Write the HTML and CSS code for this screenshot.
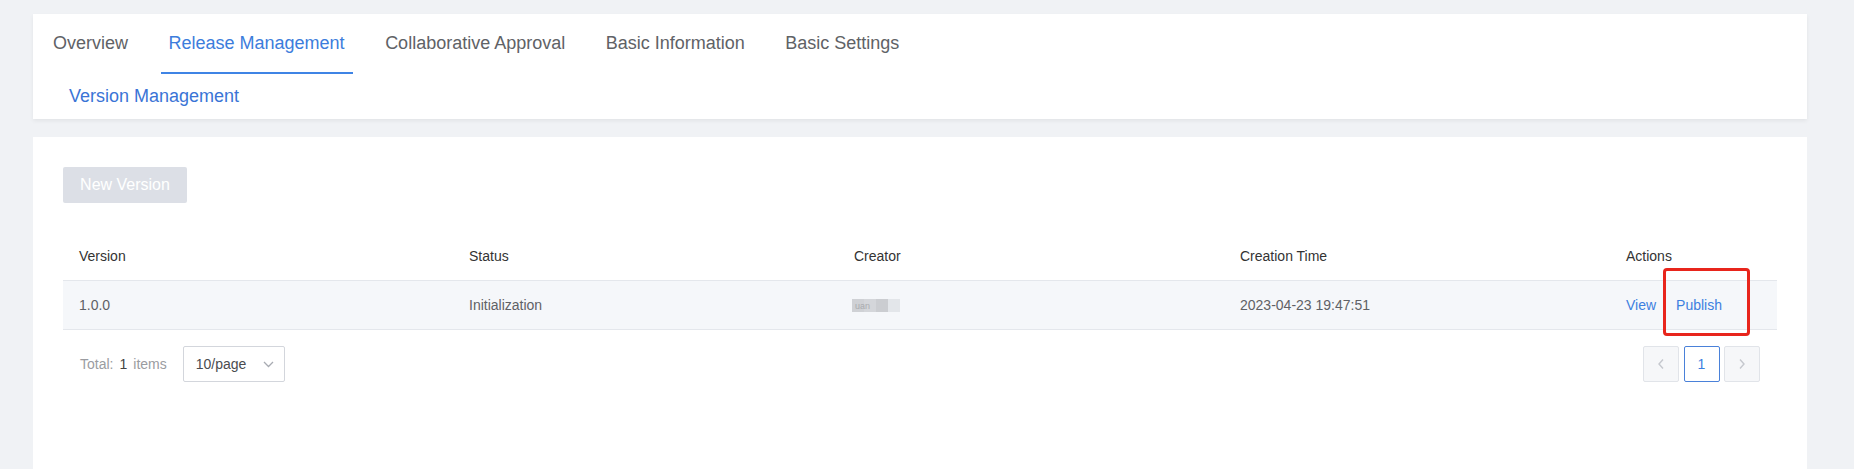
FILE: index.html
```html
<!DOCTYPE html>
<html lang="en">
<head>
<meta charset="utf-8">
<title>Release Management</title>
<link rel="stylesheet" href="styles.css">
</head>
<body>
<div class="page">
  <div class="card nav-card">
    <div class="tabs">
      <div class="tab">Overview</div>
      <div class="tab active">Release Management</div>
      <div class="tab">Collaborative Approval</div>
      <div class="tab">Basic Information</div>
      <div class="tab">Basic Settings</div>
    </div>
    <div class="subnav">Version Management</div>
  </div>

  <div class="card main-card">
    <button class="btn-new" disabled>New Version</button>

    <div class="table">
      <div class="row head">
        <div class="cell">Version</div>
        <div class="cell">Status</div>
        <div class="cell">Creator</div>
        <div class="cell">Creation Time</div>
        <div class="cell">Actions</div>
      </div>
      <div class="row body">
        <div class="cell">1.0.0</div>
        <div class="cell">Initialization</div>
        <div class="cell"><span class="blur"><span class="blur-text">uan</span></span></div>
        <div class="cell">2023-04-23 19:47:51</div>
        <div class="cell actions">
          <a class="link">View</a><a class="link publish">Publish</a>
          <div class="highlight"></div>
        </div>
      </div>
    </div>

    <div class="pager">
      <div class="pager-left">
        <span class="muted">Total:</span><span class="num">1</span><span class="muted">items</span>
        <div class="select">
          <span>10/page</span>
          <svg class="chev" width="11" height="7" viewBox="0 0 11 7"><path d="M1 1l4.5 4.5L10 1" fill="none" stroke="#a8abb2" stroke-width="1.3"/></svg>
        </div>
      </div>
      <div class="pager-right">
        <div class="pbtn disabled"><svg width="8" height="12" viewBox="0 0 8 12"><path d="M6 1.5L2 6l4 4.5" fill="none" stroke="#c5c8ce" stroke-width="1.4"/></svg></div>
        <div class="pbtn current">1</div>
        <div class="pbtn disabled"><svg width="8" height="12" viewBox="0 0 8 12"><path d="M2 1.5L6 6l-4 4.5" fill="none" stroke="#c5c8ce" stroke-width="1.4"/></svg></div>
      </div>
    </div>
  </div>
</div>
</body>
</html>
```
FILE: styles.css
```css
html, body {
  margin: 0;
  padding: 0;
  background: #f0f2f5;
  font-family: "Liberation Sans", Arial, sans-serif;
  height: 100%;
  overflow: hidden;
}

.page {
  padding: 14px 47px 0 33px;
  display: flex;
  flex-direction: column;
  gap: 18px;
}

.card {
  background: #ffffff;
}

.nav-card {
  box-shadow: 0 2px 4px rgba(0, 0, 0, 0.06);
  display: flex;
  flex-direction: column;
}

.tabs {
  display: flex;
  gap: 24.5px;
  padding-left: 12px;
  height: 60px;
}

.tab {
  padding: 0 8px;
  font-size: 18px;
  color: #606266;
  line-height: 58px;
  border-bottom: 2px solid transparent;
  white-space: nowrap;
}

.tab.active {
  color: #3c7ddc;
  border-bottom-color: #3f84e5;
}

.subnav {
  padding-left: 36px;
  height: 45px;
  line-height: 45px;
  font-size: 18px;
  color: #3a74d6;
}

.main-card {
  padding: 30px 30px 0 30px;
  min-height: 332px;
  box-sizing: border-box;
}

.btn-new {
  display: block;
  width: 124px;
  height: 36px;
  border: none;
  border-radius: 2px;
  background: #dcdfe6;
  color: #ffffff;
  font-family: "Liberation Sans", Arial, sans-serif;
  font-size: 16px;
  padding: 0;
}

.table {
  margin-top: 29px;
}

.row {
  display: grid;
  grid-template-columns: 390px 385px 386px 386px 1fr;
  border-bottom: 1px solid #e4e7ec;
}

.row.body {
  background: #f5f7fa;
}

.cell {
  padding-left: 16px;
  height: 48px;
  line-height: 48px;
  font-size: 14px;
  white-space: nowrap;
}

.head .cell {
  color: #333333;
}

.body .cell {
  color: #5f6166;
}

.actions {
  position: relative;
}

.link {
  color: #3d7fe0;
  cursor: pointer;
}

.publish {
  margin-left: 20px;
}

.highlight {
  position: absolute;
  left: 53px;
  top: -13px;
  width: 81px;
  height: 62px;
  border: 3.5px solid #e8251c;
  border-radius: 4px;
}

.blur {
  display: inline-block;
  vertical-align: middle;
  position: relative;
  width: 48px;
  height: 13px;
  margin-left: -2px;
  margin-top: -2px;
  background: linear-gradient(to right, #cfd1d5 0, #cfd1d5 12px, #d4d6da 12px, #d4d6da 24px, #cbcdd1 24px, #cbcdd1 36px, #e3e6ea 36px, #e3e6ea 48px);
}

.blur-text {
  position: absolute;
  left: 3px;
  top: 2px;
  font-size: 9px;
  line-height: 10px;
  color: #8a8c90;
  opacity: 0.55;
}

.pager {
  margin-top: 16px;
  padding: 0 17px;
  display: flex;
  justify-content: space-between;
  align-items: center;
}

.pager-left {
  display: flex;
  align-items: center;
  font-size: 14px;
}

.muted {
  color: #9a9ca1;
}

.num {
  color: #444;
  margin: 0 6px;
}

.select {
  margin-left: 16px;
  width: 102px;
  height: 36px;
  box-sizing: border-box;
  border: 1px solid #d3d6dc;
  border-radius: 2px;
  display: flex;
  align-items: center;
  justify-content: space-between;
  padding: 0 10px 0 12px;
  color: #4a4c50;
}

.pager-right {
  display: flex;
  gap: 4.5px;
}

.pbtn {
  width: 36px;
  height: 36px;
  box-sizing: border-box;
  border: 1px solid #e1e4e9;
  border-radius: 2px;
  display: flex;
  align-items: center;
  justify-content: center;
  font-size: 14px;
}

.pbtn.disabled {
  background: #f6f7f9;
}

.pbtn.current {
  border-color: #4a81d9;
  color: #3d7fe0;
  background: #fff;
}
```
